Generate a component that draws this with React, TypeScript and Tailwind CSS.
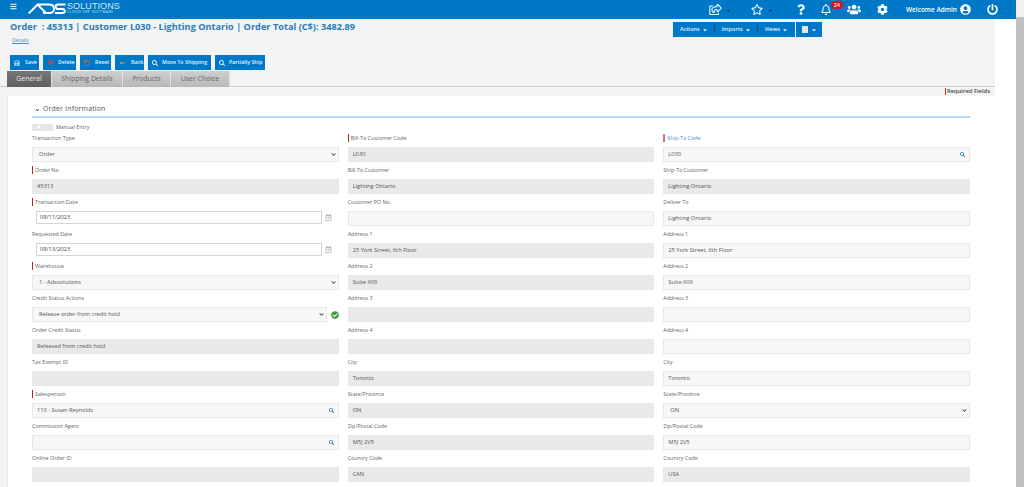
import React from "react";
import { FaBars, FaRegShareSquare, FaRegStar, FaQuestion, FaRegBell, FaUsers, FaCog, FaUserCircle, FaPowerOff, FaSearch, FaCaretDown, FaChevronDown, FaSave, FaTimes, FaUndo, FaLongArrowAltLeft, FaCheckCircle, FaRegCalendarAlt } from "react-icons/fa";

const font = { fontFamily: '"Open Sans", sans-serif' };

function Label({ text, req, blue }: { text: string; req?: boolean; blue?: boolean }) {
  return (
    <div className={`h-[8px] mb-[5px] flex items-center text-[5.4px] leading-[8px] ${blue ? "text-[#4f86d8]" : "text-[#666]"}`}>
      {req && <span className={`${blue ? "w-[2px] bg-[#c77b80]" : "w-[1px] bg-[#a82a2a]"} h-[8px] mr-[2px]`} />}
      <span>{text}</span>
    </div>
  );
}

function Box({ value, kind, icon }: { value?: string; kind: "ro" | "in" | "sel"; icon?: boolean }) {
  const bg = kind === "ro" ? "bg-[#e9e9e9]" : "bg-[#f7f7f7]";
  return (
    <div className={`h-[15px] w-full border border-[#e8e8e8] ${bg} flex items-center justify-between text-[5.7px] text-[#555] ${kind === "sel" ? "pl-[6px] pr-[2px]" : "px-[4px]"}`}>
      <span>{value}</span>
      {icon && <FaSearch className="text-[#2a7fc4] w-[5px] h-[5px]" />}
      {kind === "sel" && <FaChevronDown className="text-[#333] w-[5px] h-[5px]" />}
    </div>
  );
}

function Field({ label, req, blue, value, kind = "ro", icon }: { label: string; req?: boolean; blue?: boolean; value?: string; kind?: "ro" | "in" | "sel"; icon?: boolean }) {
  return (
    <div className="h-[32px] pt-[1px]">
      <Label text={label} req={req} blue={blue} />
      <Box value={value} kind={kind} icon={icon} />
    </div>
  );
}

function DateField({ label, req, value }: { label: string; req?: boolean; value: string }) {
  return (
    <div className="h-[32px] pt-[1px]">
      <Label text={label} req={req} />
      <div className="flex items-center pl-[4px]">
        <div className="h-[13px] w-[286px] border border-[#d5d5d5] bg-white flex items-center pl-[3px] text-[5.7px] text-[#444]">{value}</div>
        <FaRegCalendarAlt className="ml-[3px] w-[7px] h-[7px] text-[#b5b5b5]" />
      </div>
    </div>
  );
}

function ToolBtn({ icon, text, w, gap }: { icon: React.ReactNode; text: string; w: string; gap: string }) {
  return (
    <div className={`h-[15px] ${w} ${gap} pl-[4px] bg-[#0078c8] flex items-center text-[#e6f2fb] text-[5.3px] font-semibold whitespace-nowrap`}>
      {icon}
      <span>{text}</span>
    </div>
  );
}

function Tab({ text, w, active }: { text: string; w: string; active?: boolean }) {
  return (
    <div className={`h-[16px] ${w} flex items-center justify-center text-[6.9px] border-r border-[#e2e2e2] ${active ? "bg-gradient-to-b from-[#777] to-[#5f5f5f] text-[#e8e8e8]" : "bg-gradient-to-b from-[#cfcfcf] to-[#b8b8b8] text-[#666]"}`}>
      {text}
    </div>
  );
}

function MenuItem({ text, sep }: { text: string; sep?: boolean }) {
  return (
    <div className={`h-[9px] flex items-center gap-[2px] px-[6.5px] ${sep ? "border-r border-[#1b4f7c]" : ""}`}>
      <span>{text}</span>
      <FaCaretDown className="w-[6px] h-[6px]" />
    </div>
  );
}

function Logo() {
  return (
    <svg width="38" height="13" viewBox="0 0 38 13" className="block" fill="none" stroke="#fff" strokeWidth="2">
      <path d="M0.7 11.5 L9.5 2.6 L18 11" />
      <path d="M9.5 2.6 H21 Q26 2.6 26 7 Q26 11 21 11 H15" />
      <path d="M37.5 2.6 H30 Q27.6 2.6 27.6 4.8 Q27.6 6.9 30 6.9 H34.5 Q36.8 6.9 36.8 9 Q36.8 11 34.5 11 H27" />
    </svg>
  );
}

export default function App() {
  return (
    <div className="h-[487px] w-[1024px] overflow-hidden flex bg-white" style={font}>
      <div className="w-[1016px] h-full flex flex-col">
        {/* Top bar */}
        <header className="h-[19px] shrink-0 bg-[#0078c8] flex items-center text-white">
          <FaBars className="ml-[10px] w-[7px] h-[7px] -mt-[7px]" />
          <div className="ml-[11px] -mt-[2px] flex items-center gap-[1px]">
            <Logo />
            <div className="flex flex-col leading-none">
              <span className="text-[9px] leading-[7px] tracking-[0.1px] text-[#d5e9f7]" style={{ fontFamily: '"Liberation Sans", sans-serif' }}>SOLUTIONS</span>
              <span className="text-[3.5px] leading-[4px] tracking-[0.5px] text-[#cfe5f5]">CLOUD ERP SOFTWARE</span>
            </div>
          </div>
          <div className="ml-auto flex items-center">
            <FaRegShareSquare className="w-[13px] h-[11px]" />
            <FaCaretDown className="w-[5px] h-[5px] ml-[4px] mt-[2px] text-[#12263a]" />
            <FaRegStar className="w-[12px] h-[11px] ml-[20px]" />
            <FaCaretDown className="w-[5px] h-[5px] ml-[5px] mt-[2px] text-[#12263a]" />
            <FaQuestion className="w-[8px] h-[11px] ml-[24px]" />
            <div className="relative ml-[16px]">
              <FaRegBell className="w-[10px] h-[11px]" />
              <span className="absolute -top-[3px] left-[10px] w-[12px] h-[8px] rounded-full bg-[#d3151f] text-[5px] leading-[8px] text-center font-semibold">24</span>
            </div>
            <FaUsers className="w-[14px] h-[11px] ml-[16px]" />
            <FaCog className="w-[11px] h-[11px] ml-[16px]" />
            <span className="ml-[18px] text-[6.5px] font-semibold whitespace-nowrap">Welcome Admin</span>
            <FaUserCircle className="w-[11px] h-[11px] ml-[3px]" />
            <FaPowerOff className="w-[11px] h-[11px] ml-[16px] mr-[18px]" />
          </div>
        </header>

        <div className="w-[995px] flex-1 min-h-0 bg-[#f3f3f3] flex flex-col">
          {/* Title area */}
          <div className="h-[36px] shrink-0 flex justify-between relative">
            <div className="pl-[10px] pt-[1px]">
              <div className="text-[9.2px] leading-[14px] font-bold text-[#2c7bb5] whitespace-nowrap">Order&nbsp; : 45313 | Customer L030 - Lighting Ontario | Order Total (C$): 3482.89</div>
              <div className="ml-[2px] mt-[3px] text-[5.3px] leading-[7px] text-[#4a90c2] underline">Details</div>
            </div>
            <div className="mt-[3px] mr-[173px] flex gap-[1px] h-[15px] text-[#e6f2fb] text-[5.5px] font-semibold">
              <div className="bg-[#0078c8] w-[122px] flex items-center justify-center"><MenuItem text="Actions" sep /><MenuItem text="Imports" sep /><MenuItem text="Views" /></div>
              <div className="bg-[#0078c8] w-[26px] flex items-center justify-center gap-[3px]">
                <span className="w-[6px] h-[7px] bg-[#e4e4e4]" />
                <FaCaretDown className="w-[6px] h-[6px]" />
              </div>
            </div>
          </div>

          {/* Toolbar */}
          <div className="h-[16px] shrink-0 pl-[10px] flex gap-[4px]">
            <ToolBtn w="w-[29px]" gap="gap-[5px]" text="Save" icon={<FaSave className="shrink-0 w-[6px] h-[6px] text-[#b9dcf5]" />} />
            <ToolBtn w="w-[33px]" gap="gap-[4px]" text="Delete" icon={<FaTimes className="shrink-0 w-[7px] h-[7px] text-[#e5402a]" />} />
            <ToolBtn w="w-[31px]" gap="gap-[5px]" text="Reset" icon={<FaUndo className="shrink-0 w-[6px] h-[6px] text-[#d9622b]" />} />
            <ToolBtn w="w-[29px]" gap="gap-[5px]" text="Back" icon={<FaLongArrowAltLeft className="shrink-0 w-[7px] h-[6px] text-[#e8954a]" />} />
            <ToolBtn w="w-[63px]" gap="gap-[4px]" text="Move To Shipping" icon={<FaSearch className="shrink-0 w-[6px] h-[6px] text-[#e6f2fb]" />} />
            <ToolBtn w="w-[50px]" gap="gap-[4px]" text="Partially Ship" icon={<FaSearch className="shrink-0 w-[6px] h-[6px] text-[#e6f2fb]" />} />
          </div>

          {/* Tabs */}
          <div className="h-[16px] shrink-0 pl-[7px] flex border-b border-[#cfcfcf]">
            <Tab text="General" w="w-[45px]" active />
            <Tab text="Shipping Details" w="w-[71px]" />
            <Tab text="Products" w="w-[48px]" />
            <Tab text="User Choice" w="w-[59px]" />
          </div>

          {/* Required */}
          <div className="h-[9px] shrink-0 flex justify-end items-center pr-[5px] text-[5.8px] font-semibold text-[#444]">
            <span className="w-[1px] h-[7px] bg-[#b03a3a] mr-[1px]" />
            Required Fields
          </div>

          {/* Panel */}
          <div className="flex-1 min-h-0 ml-[7px] bg-white border-l border-[#e8e8e8] pl-[24px] pr-[25px]">
            <div className="h-[22px] pt-[7px] border-b-2 border-[#b9d9f0] flex items-center gap-[2px] text-[7px] text-[#555]">
              <FaChevronDown className="ml-[3px] w-[5px] h-[4px] text-[#222]" />
              <span className="ml-[1px] tracking-[0.15px]">Order Information</span>
            </div>
            <div className="h-[14px] pt-[4px] mb-[1px] flex items-center gap-[2px] text-[5.4px] text-[#666]">
              <div className="w-[21px] h-[7px] bg-[#e6e6e6] pl-[4px] flex items-center"><span className="w-[6px] h-[6px] bg-[#f6f6f6] rounded-[1px] border border-[#e0e0e0]" /></div>
              <span className="ml-[1px]">Manual Entry</span>
            </div>
            <div className="grid grid-cols-3 gap-x-[9px]">
              <div>
                <Field label="Transaction Type" value="Order" kind="sel" />
                <Field label="Order No" req value="45313" />
                <DateField label="Transaction Date" req value="08/11/2023" />
                <DateField label="Requested Date" value="08/13/2023" />
                <Field label="Warehouse" req value="1 - Adssolutions" kind="sel" />
                <div className="h-[32px] pt-[1px]">
                  <Label text="Credit Status Actions" />
                  <div className="flex items-center">
                    <div className="w-[295px]"><Box value="Release order from credit hold" kind="sel" /></div>
                    <FaCheckCircle className="ml-[4px] w-[8px] h-[8px] text-[#3d9a35]" />
                  </div>
                </div>
                <Field label="Order Credit Status" value="Released from credit hold" />
                <Field label="Tax Exempt ID" />
                <Field label="Salesperson" req value="110 - Susan Reynolds" kind="in" icon />
                <Field label="Commission Agent" kind="in" icon />
                <Field label="Online Order ID" />
              </div>
              <div>
                <Field label="Bill-To Customer Code" req value="L030" />
                <Field label="Bill-To Customer" value="Lighting Ontario" />
                <Field label="Customer PO No." kind="in" />
                <Field label="Address 1" value="25 York Street, 6th Floor" />
                <Field label="Address 2" value="Suite 609" />
                <Field label="Address 3" />
                <Field label="Address 4" />
                <Field label="City" value="Toronto" />
                <Field label="State/Province" value="ON" />
                <Field label="Zip/Postal Code" value="M5J 2V5" />
                <Field label="Country Code" value="CAN" />
              </div>
              <div>
                <Field label="Ship-To Code" req blue value="L030" kind="in" icon />
                <Field label="Ship-To Customer" value="Lighting Ontario" />
                <Field label="Deliver To" value="Lighting Ontario" kind="in" />
                <Field label="Address 1" value="25 York Street, 6th Floor" kind="in" />
                <Field label="Address 2" value="Suite 609" kind="in" />
                <Field label="Address 3" kind="in" />
                <Field label="Address 4" kind="in" />
                <Field label="City" value="Toronto" kind="in" />
                <Field label="State/Province" value="ON" kind="sel" />
                <Field label="Zip/Postal Code" value="M5J 2V5" kind="in" />
                <Field label="Country Code" value="USA" />
              </div>
            </div>
          </div>
        </div>
      </div>
      {/* Scrollbar */}
      <div className="w-[8px] h-full bg-[#f1f1f1] flex flex-col">
        <div className="h-[17px] shrink-0" />
        <div className="flex-1 bg-[#c1c1c1]" />
      </div>
    </div>
  );
}
